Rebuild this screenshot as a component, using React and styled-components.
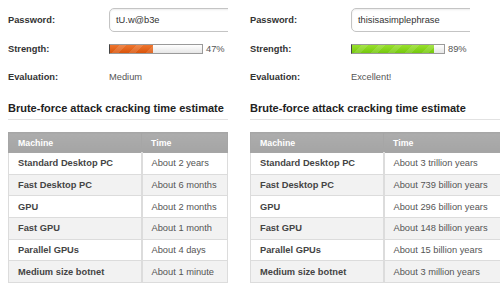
import React from "react";
import styled, { createGlobalStyle } from "styled-components";

const GlobalStyle = createGlobalStyle`
  html, body {
    margin: 0;
    padding: 0;
    background: #fff;
    overflow: hidden;
  }
  body {
    font-family: "Liberation Sans", Arial, Helvetica, sans-serif;
    -webkit-font-smoothing: antialiased;
  }
`;

const Page = styled.div`
  display: grid;
  grid-template-columns: 220px 260px;
  column-gap: 22px;
  padding: 8px 0 0 8px;
  width: 500px;
  height: 289px;
  box-sizing: border-box;
  overflow: hidden;
`;

const Panel = styled.section`
  display: flex;
  flex-direction: column;
  min-width: 0;
`;

const FieldRow = styled.div`
  display: grid;
  grid-template-columns: 101px 1fr;
  align-items: center;
  height: ${(p) => p.$h}px;
  margin-top: ${(p) => p.$mt || 0}px;
`;

const Label = styled.span`
  font-size: 9.3px;
  font-weight: bold;
  color: #333;
`;

const Value = styled.span`
  font-size: 9.3px;
  color: #555;
`;

const InputClip = styled.div`
  width: 119px;
  height: 24px;
  overflow: hidden;
`;

const TextInput = styled.div`
  width: 150px;
  height: 24px;
  box-sizing: border-box;
  border: 1px solid #c4c4c4;
  border-radius: 5px;
  background: #fff;
  box-shadow: inset 0 1px 2px rgba(0, 0, 0, 0.08);
  padding: 0 6px;
  display: flex;
  align-items: center;
  font-size: 9.3px;
  color: #333;
`;

const Meter = styled.div`
  display: flex;
  align-items: center;
  gap: 3px;
`;

const Track = styled.div`
  width: 94px;
  height: 10px;
  box-sizing: border-box;
  border: 1px solid #9a9a9a;
  border-left-color: #444;
  background: linear-gradient(#ffffff, #e6e6e6);
  overflow: hidden;
`;

const Fill = styled.div`
  height: 100%;
  background:
    repeating-linear-gradient(
      135deg,
      rgba(255, 255, 255, 0) 0px,
      rgba(255, 255, 255, 0) 7px,
      rgba(255, 255, 255, 0.13) 7px,
      rgba(255, 255, 255, 0.13) 12px
    ),
    linear-gradient(${(p) => p.$top}, ${(p) => p.$bottom});
`;

const Heading = styled.h2`
  margin: 16px 0 0;
  font-size: 11px;
  line-height: 13px;
  font-weight: bold;
  color: #222;
  padding-bottom: 4px;
  border-bottom: 1px solid #e2e2e2;
  white-space: nowrap;
`;

const Table = styled.table`
  margin-top: 12px;
  width: ${(p) => p.$w}px;
  border-collapse: collapse;
  table-layout: fixed;
  font-size: 9.3px;
`;

const HeadCell = styled.th`
  background: linear-gradient(#adadad, #a4a4a4);
  color: #fff;
  font-weight: bold;
  font-size: 8.8px;
  text-align: left;
  height: 20px;
  padding: 0 9px;
  box-sizing: border-box;
  border: 1px solid #a6a6a6;
`;

const Row = styled.tr`
  background: ${(p) => (p.$alt ? "#f2f2f2" : "#ffffff")};
`;

const Cell = styled.td`
  height: 21.67px;
  box-sizing: border-box;
  padding: 0 9px;
  border: 1px solid #dcdcdc;
  border-right-width: ${(p) => (p.$first ? 2 : 1)}px;
  color: ${(p) => (p.$first ? "#444" : "#555")};
  font-weight: ${(p) => (p.$first ? "bold" : "normal")};
  white-space: nowrap;
  overflow: hidden;
`;

const machines = [
  "Standard Desktop PC",
  "Fast Desktop PC",
  "GPU",
  "Fast GPU",
  "Parallel GPUs",
  "Medium size botnet",
];

const panels = [
  {
    password: "tU.w@b3e",
    pct: 47,
    top: "#ee7630",
    bottom: "#d9540a",
    evaluation: "Medium",
    tableWidth: 220,
    times: [
      "About 2 years",
      "About 6 months",
      "About 2 months",
      "About 1 month",
      "About 4 days",
      "About 1 minute",
    ],
  },
  {
    password: "thisisasimplephrase",
    pct: 89,
    top: "#98e02c",
    bottom: "#74c80e",
    evaluation: "Excellent!",
    tableWidth: 260,
    times: [
      "About 3 trillion years",
      "About 739 billion years",
      "About 296 billion years",
      "About 148 billion years",
      "About 15 billion years",
      "About 3 million years",
    ],
  },
];

function StrengthPanel({ data }) {
  return (
    <Panel>
      <FieldRow $h={24}>
        <Label>Password:</Label>
        <InputClip>
          <TextInput>{data.password}</TextInput>
        </InputClip>
      </FieldRow>
      <FieldRow $h={18} $mt={8}>
        <Label>Strength:</Label>
        <Meter>
          <Track>
            <Fill $top={data.top} $bottom={data.bottom} style={{ width: `${data.pct}%` }} />
          </Track>
          <Value>{data.pct}%</Value>
        </Meter>
      </FieldRow>
      <FieldRow $h={18} $mt={10}>
        <Label>Evaluation:</Label>
        <Value>{data.evaluation}</Value>
      </FieldRow>
      <Heading>Brute-force attack cracking time estimate</Heading>
      <Table $w={data.tableWidth}>
        <colgroup>
          <col style={{ width: 133 }} />
          <col />
        </colgroup>
        <thead>
          <tr>
            <HeadCell>Machine</HeadCell>
            <HeadCell>Time</HeadCell>
          </tr>
        </thead>
        <tbody>
          {machines.map((m, i) => (
            <Row key={m} $alt={i % 2 === 1}>
              <Cell $first>{m}</Cell>
              <Cell>{data.times[i]}</Cell>
            </Row>
          ))}
        </tbody>
      </Table>
    </Panel>
  );
}

export default function App() {
  return (
    <>
      <GlobalStyle />
      <Page>
        {panels.map((p) => (
          <StrengthPanel key={p.password} data={p} />
        ))}
      </Page>
    </>
  );
}
